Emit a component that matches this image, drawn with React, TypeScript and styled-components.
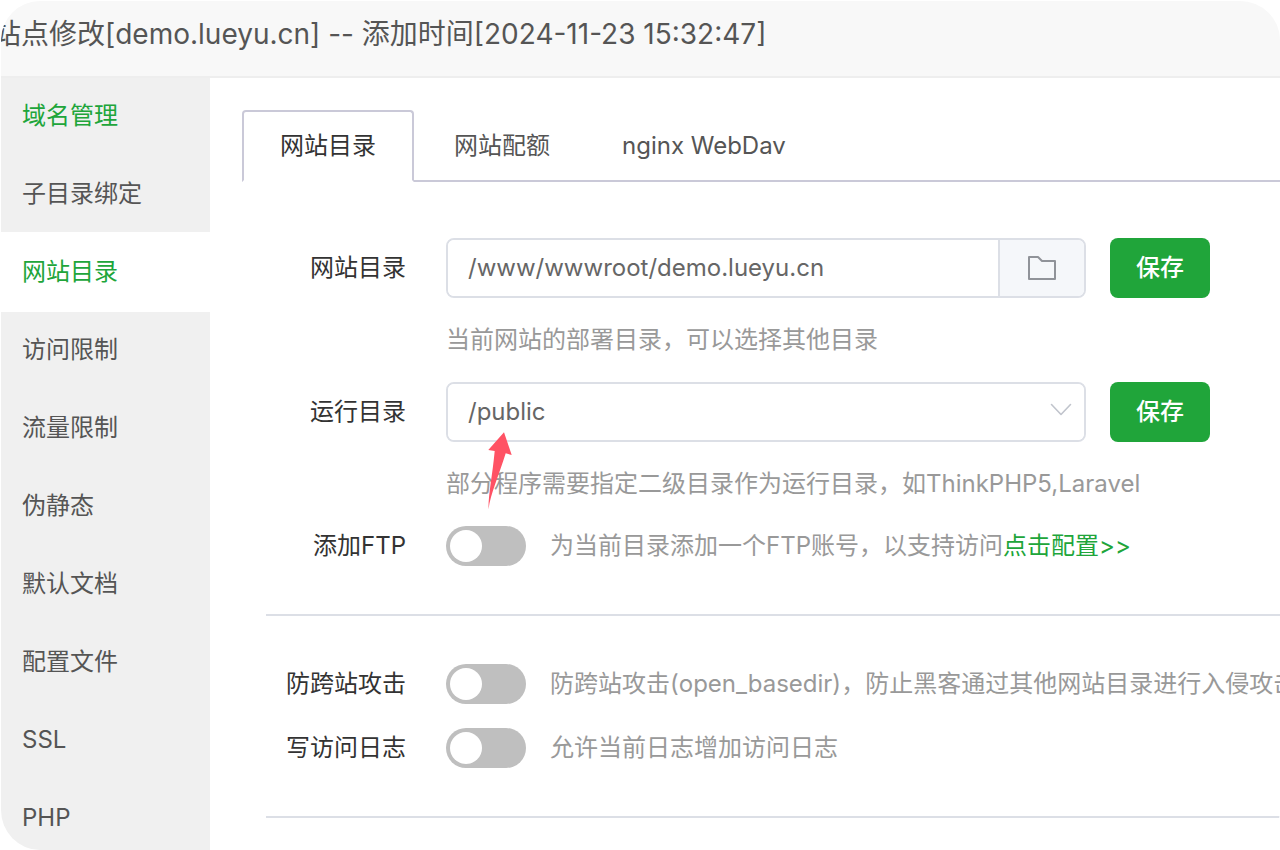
import React, { useState } from 'react';
import styled, { createGlobalStyle } from 'styled-components';

const GlobalStyle = createGlobalStyle`
  *, *::before, *::after { box-sizing: border-box; }
  body {
    margin: 0;
    background: #fff;
    font-family: Inter, "Noto Sans CJK SC", sans-serif;
    font-size: 24px;
    line-height: 36px;
    color: #333;
  }
  button, input, select { font: inherit; margin: 0; }
`;

const Dialog = styled.div`
  display: flex;
  flex-direction: column;
  height: 100vh;
  border: solid #fff;
  border-width: 1px 0 0 1px;
  border-radius: 40px;
  overflow: hidden;
`;

const Header = styled.header`
  flex: none;
  height: 77px;
  padding: 12px 0;
  background: #f8f8f8;
  border-bottom: 2px solid #eee;
`;

const Title = styled.h1`
  margin: 0 0 0 -8px;
  font-size: 28px;
  font-weight: 400;
  line-height: 42px;
  color: #555;
  white-space: nowrap;
`;

const Body = styled.div`
  flex: 1;
  min-height: 0;
  display: flex;
`;

const Sidebar = styled.nav`
  flex: none;
  width: 209px;
  background: #f0f0f0;
  overflow: hidden;
`;

const Menu = styled.ul`
  list-style: none;
  margin: -2px 0 0;
  padding: 0;
`;

const MenuItem = styled.li`
  margin-bottom: -2px;
`;

const MenuLink = styled.a<{ $active?: boolean; $green?: boolean }>`
  display: block;
  padding: 0 21px;
  line-height: 80px;
  text-decoration: none;
  color: ${(p) => (p.$green || p.$active ? '#20a53a' : '#555')};
  background: ${(p) => (p.$active ? '#fff' : 'transparent')};
`;

const Main = styled.main`
  flex: 1;
  min-width: 0;
  padding: 32px 0 0 32px;
  overflow: hidden;
`;

const Tabs = styled.div`
  display: flex;
  height: 72px;
  border-bottom: 2px solid #cac9d8;
`;

const Tab = styled.button<{ $active?: boolean }>`
  height: 72px;
  margin-right: ${(p) => (p.$active ? '4px' : '0')};
  padding: 0 36px;
  border-style: solid;
  border-width: ${(p) => (p.$active ? '2px' : '2px 0')};
  border-color: ${(p) => (p.$active ? '#cac9d8 #cac9d8 #fff' : 'transparent')};
  border-radius: 4px 4px 0 0;
  background: ${(p) => (p.$active ? '#fff' : 'transparent')};
  color: ${(p) => (p.$active ? '#333' : '#555')};
  white-space: nowrap;
`;

const Form = styled.form`
  padding: 56px 0 0 24px;
`;

const Row = styled.div`
  display: flex;
  align-items: center;
`;

const Label = styled.label`
  flex: none;
  width: 140px;
  margin-right: 40px;
  text-align: right;
`;

const Field = styled.div`
  position: relative;
  display: flex;
  flex: 0 1 640px;
  min-width: 0;
  height: 60px;
  border: 2px solid #dcdfe6;
  border-radius: 8px;
`;

const TextInput = styled.input`
  flex: 1;
  min-width: 0;
  padding: 0 20px;
  border: 0;
  border-radius: 6px;
  outline: 0;
  background: #fff;
  color: #666;
`;

const FolderButton = styled.button`
  flex: none;
  display: flex;
  align-items: center;
  justify-content: center;
  width: 86px;
  padding: 0;
  border: 0;
  border-left: 2px solid #dcdfe6;
  border-radius: 0 6px 6px 0;
  background: #f5f7fa;
`;

const Select = styled.select`
  flex: 1;
  min-width: 0;
  padding: 0 48px 0 20px;
  border: 0;
  border-radius: 6px;
  outline: 0;
  appearance: none;
  background: #fff;
  color: #666;
`;

const Chevron = styled.svg`
  position: absolute;
  top: 18px;
  right: 12px;
  pointer-events: none;
`;

const Pointer = styled.svg`
  position: absolute;
  top: 48px;
  left: 38px;
  z-index: 1;
  pointer-events: none;
`;

const SaveButton = styled.button`
  flex: none;
  width: 100px;
  height: 60px;
  margin-left: 24px;
  padding: 0;
  border: 0;
  border-radius: 8px;
  background: #20a53a;
  color: #fff;
  font-weight: 500;
`;

const Hint = styled.p`
  margin: 24px 0 24px 180px;
  color: #999;
  white-space: nowrap;
`;

const Switch = styled.input`
  flex: none;
  appearance: none;
  width: 80px;
  height: 40px;
  border-radius: 20px;
  background: #bfbfbf;
  cursor: pointer;

  &::before {
    content: '';
    display: block;
    width: 32px;
    height: 32px;
    margin: 4px;
    border-radius: 50%;
    background: #fff;
  }
  &:checked { background: #20a53a; }
  &:checked::before { margin-left: 44px; }
`;

const SwitchRow = styled(Row)`
  height: 40px;
  & + & { margin-top: 24px; }
`;

const Note = styled.span`
  margin-left: 24px;
  color: #999;
  white-space: nowrap;
`;

const GreenLink = styled.a`
  color: #20a53a;
  text-decoration: none;
`;

const Divider = styled.hr`
  height: 2px;
  margin: 48px 0;
  border: 0;
  background: #dcdfe6;
`;

const menu = ['域名管理', '子目录绑定', '网站目录', '访问限制', '流量限制', '伪静态', '默认文档', '配置文件', 'SSL', 'PHP'];
const tabs = ['网站目录', '网站配额', 'nginx WebDav'];

export default function App() {
  const [path, setPath] = useState('/www/wwwroot/demo.lueyu.cn');
  return (
    <>
      <GlobalStyle />
      <Dialog lang="zh-CN">
        <Header>
          <Title>站点修改[demo.lueyu.cn] -- 添加时间[2024-11-23 15:32:47]</Title>
        </Header>
        <Body>
          <Sidebar>
            <Menu>
              {menu.map((name, i) => (
                <MenuItem key={name}>
                  <MenuLink href="#" $green={i === 0} $active={i === 2}>{name}</MenuLink>
                </MenuItem>
              ))}
            </Menu>
          </Sidebar>
          <Main>
            <Tabs role="tablist">
              {tabs.map((name, i) => (
                <Tab key={name} type="button" role="tab" aria-selected={i === 0} $active={i === 0}>{name}</Tab>
              ))}
            </Tabs>
            <Form>
              <Row>
                <Label htmlFor="path">网站目录</Label>
                <Field>
                  <TextInput id="path" value={path} onChange={(e) => setPath(e.target.value)} />
                  <FolderButton type="button" aria-label="选择目录">
                    <svg width="28" height="24" viewBox="0 0 28 24" fill="none" stroke="#909399" strokeWidth="2" strokeLinejoin="round">
                      <path d="M1 1H10L14 5H27V23H1Z" />
                    </svg>
                  </FolderButton>
                </Field>
                <SaveButton type="button">保存</SaveButton>
              </Row>
              <Hint>当前网站的部署目录，可以选择其他目录</Hint>
              <Row>
                <Label htmlFor="run">运行目录</Label>
                <Field>
                  <Select id="run" defaultValue="/public">
                    <option>/public</option>
                  </Select>
                  <Chevron width="22" height="14" viewBox="0 0 22 14" fill="none" stroke="#c0c4cc" strokeWidth="1.6" strokeLinecap="round" strokeLinejoin="round">
                    <path d="M1.5 2.5L11 12.5L20.5 2.5" />
                  </Chevron>
                  <Pointer width="28" height="80" viewBox="0 0 28 80">
                    <path d="M18 0.3L25.7 23L19.7 21.3C13 43 4.5 62 2.5 77.3C2.3 62 6.5 43 8.7 19L2.3 18Z" fill="#ff5264" />
                  </Pointer>
                </Field>
                <SaveButton type="button">保存</SaveButton>
              </Row>
              <Hint>部分程序需要指定二级目录作为运行目录，如ThinkPHP5,Laravel</Hint>
              <SwitchRow>
                <Label htmlFor="ftp">添加FTP</Label>
                <Switch id="ftp" type="checkbox" role="switch" />
                <Note>为当前目录添加一个FTP账号，以支持访问<GreenLink href="#">点击配置&gt;&gt;</GreenLink></Note>
              </SwitchRow>
              <Divider />
              <SwitchRow>
                <Label htmlFor="basedir">防跨站攻击</Label>
                <Switch id="basedir" type="checkbox" role="switch" />
                <Note>防跨站攻击(open_basedir)，防止黑客通过其他网站目录进行入侵攻击</Note>
              </SwitchRow>
              <SwitchRow>
                <Label htmlFor="log">写访问日志</Label>
                <Switch id="log" type="checkbox" role="switch" />
                <Note>允许当前日志增加访问日志</Note>
              </SwitchRow>
              <Divider />
            </Form>
          </Main>
        </Body>
      </Dialog>
    </>
  );
}
